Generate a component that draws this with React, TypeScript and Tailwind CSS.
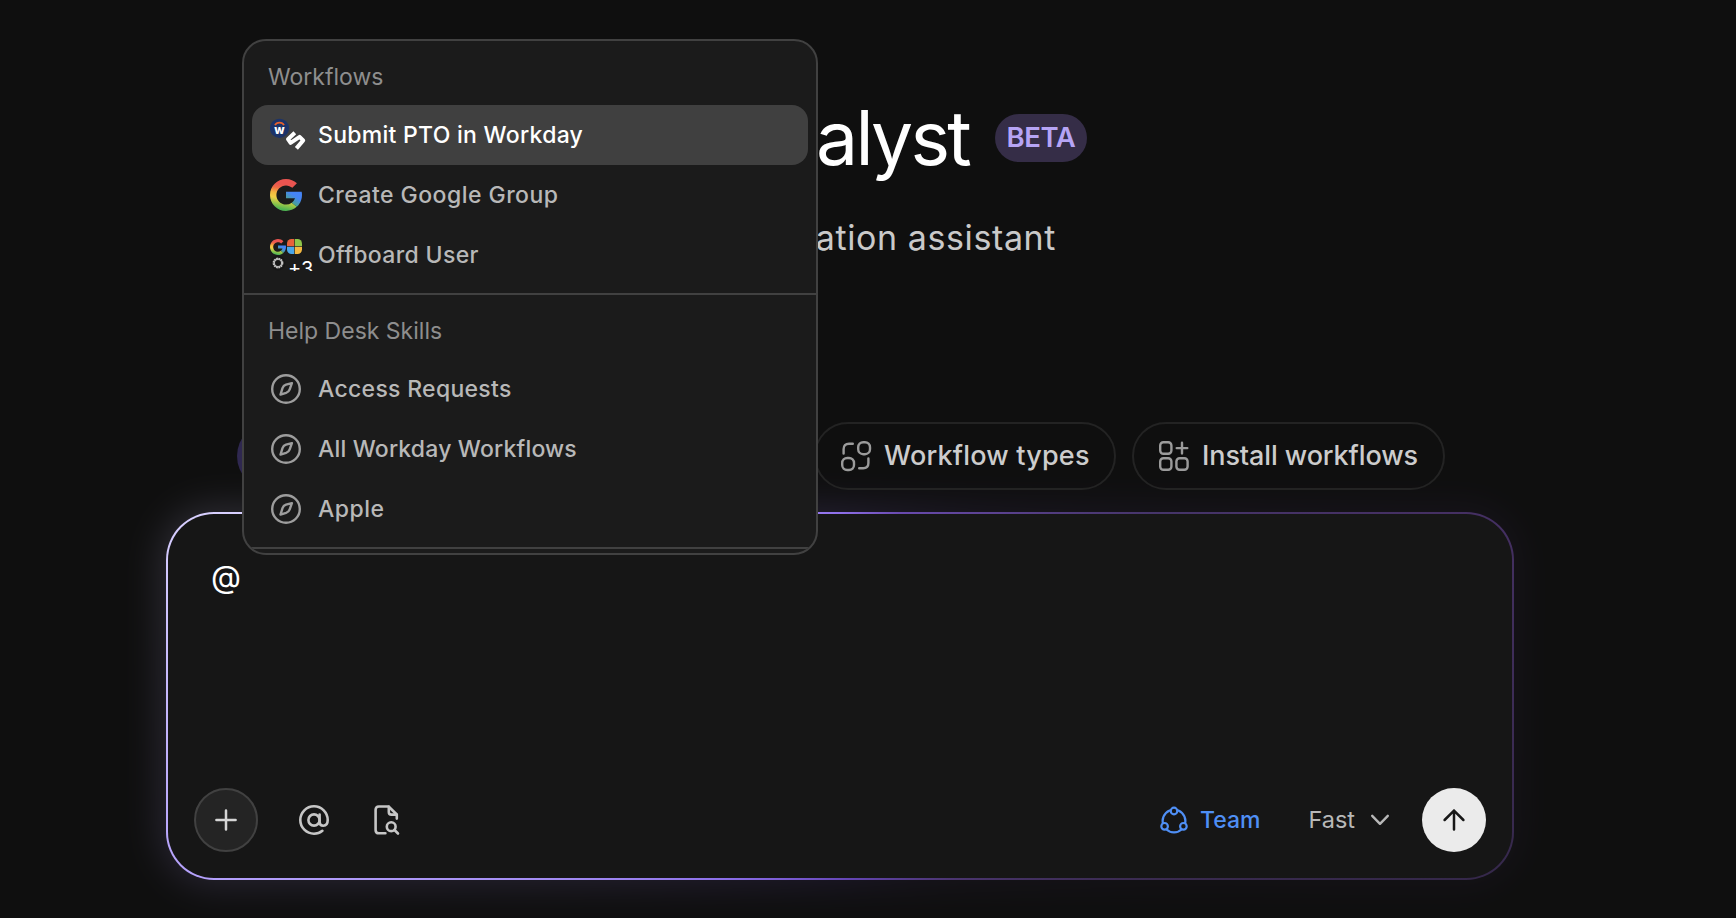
import type { ReactNode } from "react";

const workflows = [
  { label: "Submit PTO in Workday", icon: <WorkdayServalIcon />, active: true, tracking: "tracking-[0.28px]" },
  { label: "Create Google Group", icon: <GoogleIcon size={32} id="g-lg" />, active: false, tracking: "tracking-[0.46px]" },
  { label: "Offboard User", icon: <OffboardIcon />, active: false, tracking: "tracking-[0.35px]" },
];

const skills = [
  { label: "Access Requests", tracking: "tracking-[0.3px]" },
  { label: "All Workday Workflows", tracking: "tracking-[0.18px]" },
  { label: "Apple", tracking: "tracking-[0.5px]" },
];

function GoogleIcon({ size, id }: { size: number; id: string }) {
  return (
    <svg width={size} height={size} viewBox="4 4 40 40" className="shrink-0">
      <defs>
        <linearGradient id={id} x1="0.15" y1="0" x2="0" y2="1">
          <stop offset="0.12" stopColor="#ea5450" />
          <stop offset="0.24" stopColor="#ee6a45" />
          <stop offset="0.4" stopColor="#f6b83f" />
          <stop offset="0.55" stopColor="#f3d045" />
          <stop offset="0.75" stopColor="#8cc34a" />
          <stop offset="0.88" stopColor="#4fb453" />
        </linearGradient>
        <linearGradient id={id + "-b"} x1="0.9" y1="0.3" x2="0.4" y2="1">
          <stop offset="0.2" stopColor="#4584f5" />
          <stop offset="1" stopColor="#4bae68" />
        </linearGradient>
      </defs>
      <path
        fill={`url(#${id})`}
        d="M24 36c-6.63 0-12-5.37-12-12s5.37-12 12-12c3.06 0 5.84 1.15 7.96 3.04l5.66-5.66C34.05 6.05 29.27 4 24 4 12.96 4 4 12.96 4 24s8.96 20 20 20c5.2 0 9.9-2 13.4-5.2l-6.2-5.2A11.9 11.9 0 0 1 24 36z"
      />
      <path
        fill={`url(#${id}-b)`}
        d="M43.6 20H24v8h11.3a12 12 0 0 1-4.1 5.6l6.2 5.2C37 39.2 44 34 44 24c0-1.34-.14-2.65-.4-4z"
      />
    </svg>
  );
}

function WorkdayServalIcon() {
  return (
    <svg width="36" height="34" viewBox="0 0 36 34" className="shrink-0">
      <circle cx="9.5" cy="10.3" r="9.6" fill="#1c3369" />
      <path d="M5 7.2a4.9 4.2 0 0 1 9 0" fill="none" stroke="#e8612c" strokeWidth="1.7" />
      <text x="9.5" y="16" textAnchor="middle" fontSize="12" fontWeight="800" fill="#fff" fontFamily="Inter, sans-serif">
        w
      </text>
      <path
        d="M24.8 14.8L18 21.2L20.6 24.8L29.6 18.9L33.2 22.4L26.4 30.4"
        fill="none"
        stroke="#fff"
        strokeWidth="4"
        strokeLinejoin="round"
      />
    </svg>
  );
}

function OffboardIcon() {
  return (
    <span className="relative block h-8 w-11 shrink-0 overflow-hidden">
      <span className="flex gap-px">
        <GoogleIcon size={16} id="g-sm" />
        <svg width="15" height="15" viewBox="0 0 15 15">
          <clipPath id="ms">
            <rect width="15" height="15" rx="4.5" />
          </clipPath>
          <g clipPath="url(#ms)">
            <rect width="7.2" height="7.2" fill="#e8613a" />
            <rect x="7.8" width="7.2" height="7.2" fill="#8fc64a" />
            <rect y="7.8" width="7.2" height="7.2" fill="#4aa6e8" />
            <rect x="7.8" y="7.8" width="7.2" height="7.2" fill="#f5b942" />
          </g>
        </svg>
      </span>
      <svg width="16" height="16" viewBox="0 0 16 16" className="block">
        <circle cx="8" cy="8" r="7.5" fill="#161616" />
        <circle cx="8" cy="8" r="3.7" fill="none" stroke="#a8a8a8" strokeWidth="1.4" />
        <circle cx="8" cy="8" r="4.4" fill="none" stroke="#c4c4c4" strokeWidth="2" strokeDasharray="1.7 0.6" />
      </svg>
      <span className="absolute top-[18px] left-[18px] text-[20px] leading-6 text-white">+3</span>
    </span>
  );
}

function CompassIcon() {
  return (
    <svg width="32" height="32" viewBox="0 0 32 32" fill="none" stroke="#9d9d9d" strokeWidth="2.4" className="shrink-0">
      <circle cx="16" cy="16" r="13.8" />
      <path
        d="M21.9 10.1l-5.9 1.6q-2.6.9-3.5 3.5l-2 6.4 5.6-1.7q2.7-.9 3.6-3.5z"
        strokeLinejoin="round"
      />
    </svg>
  );
}

function WorkflowTypesIcon() {
  return (
    <svg width="32" height="32" viewBox="0 0 32 32" fill="none" stroke="#9b9b9b" strokeWidth="2.4" strokeLinecap="round">
      <rect x="18.2" y="2.2" width="11.8" height="12" rx="5" />
      <rect x="2.2" y="18" width="11.8" height="12" rx="5" />
      <path d="M3.6 13.6V9.2q0-5.4 5.4-5.4h3.8M28.4 18.4V23q0 5.2-5.2 5.2h-4" />
    </svg>
  );
}

function InstallIcon() {
  return (
    <svg width="32" height="32" viewBox="0 0 32 32" fill="none" stroke="#9b9b9b" strokeWidth="2.4" strokeLinecap="round">
      <rect x="2.2" y="2.2" width="11.2" height="11.6" rx="3.2" />
      <rect x="2.2" y="18.2" width="11.2" height="11.6" rx="3.2" />
      <rect x="18.4" y="18.2" width="11.2" height="11.6" rx="3.2" />
      <path d="M24 2.8v10.6M18.7 8.1h10.6" />
    </svg>
  );
}

function AtIcon() {
  return (
    <svg width="32" height="32" viewBox="0 0 32 32" fill="none" stroke="#c6c6c6" strokeWidth="2.6" strokeLinecap="round">
      <circle cx="16" cy="16" r="5.6" />
      <path d="M21.6 10.6V18q0 3.7 3.7 3.7 4.4 0 4.4-5.7A13.7 13.7 0 1 0 16 29.7q4.8 0 8.4-2.9" />
    </svg>
  );
}

function FileSearchIcon() {
  return (
    <svg width="32" height="32" viewBox="0 0 32 32" fill="none" stroke="#c6c6c6" strokeWidth="2.6" strokeLinecap="round" strokeLinejoin="round">
      <path d="M15.4 29.3H8.8q-3.2 0-3.2-3.2V5.7q0-3.2 3.2-3.2h9.8l8.2 8V14.6" />
      <path d="M18.8 2.8v5.2q0 2.6 2.6 2.6h5" />
      <circle cx="21.2" cy="22.7" r="4.4" />
      <path d="M24.5 26l3.5 3.5" />
    </svg>
  );
}

function TeamIcon() {
  return (
    <svg width="32" height="32" viewBox="0 0 32 32" fill="#161616" stroke="#4f8ff5" strokeWidth="2.2">
      <circle cx="16" cy="17" r="11.4" />
      <circle cx="16" cy="7" r="3.3" />
      <circle cx="6.6" cy="22.3" r="3.3" />
      <circle cx="25.4" cy="22.3" r="3.3" />
    </svg>
  );
}

function MenuHeader({ children }: { children: ReactNode }) {
  return <div className="flex h-14 items-center px-4 text-[23px] text-[#8e8e8e]">{children}</div>;
}

function MenuItem({ icon, label, active, tracking }: { icon: ReactNode; label: string; active?: boolean; tracking: string }) {
  return (
    <div className={`flex h-[60px] items-center rounded-2xl pl-[18px] ${active ? "bg-[#404040] text-white" : "text-[#b8b8b8]"}`}>
      <span className="w-12 shrink-0">{icon}</span>
      <span className={`text-[23px] font-medium whitespace-nowrap ${tracking}`}>{label}</span>
    </div>
  );
}

function MentionMenu() {
  return (
    <div className="absolute top-[39px] left-[242px] z-20 h-[516px] w-[576px] overflow-hidden rounded-3xl border-2 border-[#414141] bg-[#1b1b1b]">
      <div className="p-2">
        <MenuHeader>Workflows</MenuHeader>
        {workflows.map((item) => (
          <MenuItem key={item.label} {...item} />
        ))}
      </div>
      <div className="border-y-2 border-[#414141] p-2">
        <MenuHeader>Help Desk Skills</MenuHeader>
        {skills.map((item) => (
          <MenuItem key={item.label} icon={<CompassIcon />} {...item} />
        ))}
      </div>
    </div>
  );
}

function Composer() {
  return (
    <div className="relative mt-[22px] h-[368px]">
      <div className="absolute inset-[-6px] rounded-[54px] opacity-[0.15] blur-[18px] bg-[conic-gradient(#9678f0,#5b4290_41deg,#453063_73deg,#35284a_115deg,#4b3570_150deg,#6a4bc0_180deg,#8b6be0_217deg,#b09af5_252deg,#d8d0ff_286deg,#9678f0)]" />
      <div className="relative h-full rounded-[48px] bg-[conic-gradient(#8f70ea,#6a4bb0_18deg,#5b4290_41deg,#46356a_60deg,#453063_73deg,#35284a_107deg,#3a2b50_120deg,#4b3570_148deg,#6445b4_177deg,#7a5bd2_196deg,#8b6ee8_212deg,#a088f2_235deg,#b4a0fb_254deg,#d8d0ff_286deg,#b7a6fb_330deg,#9678f0_353deg,#8f70ea)] p-0.5">
        <div className="flex h-full flex-col justify-between rounded-[46px] bg-[#161616] p-[26px]">
          <div className="pt-[19px] pl-[17px] text-[31px] leading-9 text-white">@</div>
          <div className="flex items-center">
            <button className="flex size-16 items-center justify-center rounded-full border-2 border-[#414141] bg-[#242424]">
              <svg width="32" height="32" viewBox="0 0 32 32" stroke="#d6d6d6" strokeWidth="2.5" strokeLinecap="round">
                <path d="M16 6.4v19.2M6.4 16h19.2" />
              </svg>
            </button>
            <div className="ml-10 flex gap-10">
              <AtIcon />
              <FileSearchIcon />
            </div>
            <div className="ml-auto flex items-center">
              <TeamIcon />
              <span className="ml-2.5 text-[23px] font-medium text-[#4f8ff5]">Team</span>
              <span className="ml-12 text-[23.5px] text-[#b8b8b8]">Fast</span>
              <svg width="20" height="12" viewBox="0 0 20 12" fill="none" stroke="#b8b8b8" strokeWidth="2.4" strokeLinecap="round" strokeLinejoin="round" className="ml-[15px]">
                <path d="M2.2 1.8l7.8 8 7.8-8" />
              </svg>
              <button className="ml-8 flex size-16 items-center justify-center rounded-full bg-[#ebebeb]">
                <svg width="32" height="32" viewBox="0 0 32 32" fill="none" stroke="#171717" strokeWidth="2.5" strokeLinecap="round" strokeLinejoin="round">
                  <path d="M16 25.6V6.6M6.6 16L16 6.6l9.4 9.4" />
                </svg>
              </button>
            </div>
          </div>
        </div>
      </div>
    </div>
  );
}

export default function App() {
  return (
    <div className="relative h-[918px] overflow-hidden bg-[#0f0f0f] font-['Inter',sans-serif] antialiased">
      <main className="ml-[166px] w-[1348px] pt-[90px]">
        <div className="flex h-24 items-center justify-end gap-[26px] pr-[427px]">
          <h1 className="pb-0.5 text-[75px] leading-none tracking-[-2.8px] text-white">Analyst</h1>
          <span className="flex h-12 w-[92px] items-center justify-center rounded-full bg-[#352d47] text-[27.5px] font-semibold tracking-[-0.4px] text-[#b6a4f5]">
            BETA
          </span>
        </div>
        <p className="mt-8 h-10 pr-[458px] text-right text-[34px] leading-10 tracking-[0.6px] text-[#c9c9c9]">
          Your automation assistant
        </p>
        <div className="relative z-10 mt-[164px] ml-[71px] flex h-[68px] gap-4">
          <div className="w-[561px] rounded-full bg-[#2f2850]" />
          <div className="flex w-[302px] items-center rounded-full border-2 border-[#232323] pl-6 text-[27px] font-medium tracking-[0.2px] whitespace-nowrap text-[#cccccc]">
            <WorkflowTypesIcon />
            <span className="ml-3">Workflow types</span>
          </div>
          <div className="flex w-[313px] items-center rounded-full border-2 border-[#232323] pl-6 text-[27px] font-medium tracking-[-0.1px] whitespace-nowrap text-[#cccccc]">
            <InstallIcon />
            <span className="ml-3">Install workflows</span>
          </div>
        </div>
        <Composer />
      </main>
      <MentionMenu />
    </div>
  );
}
